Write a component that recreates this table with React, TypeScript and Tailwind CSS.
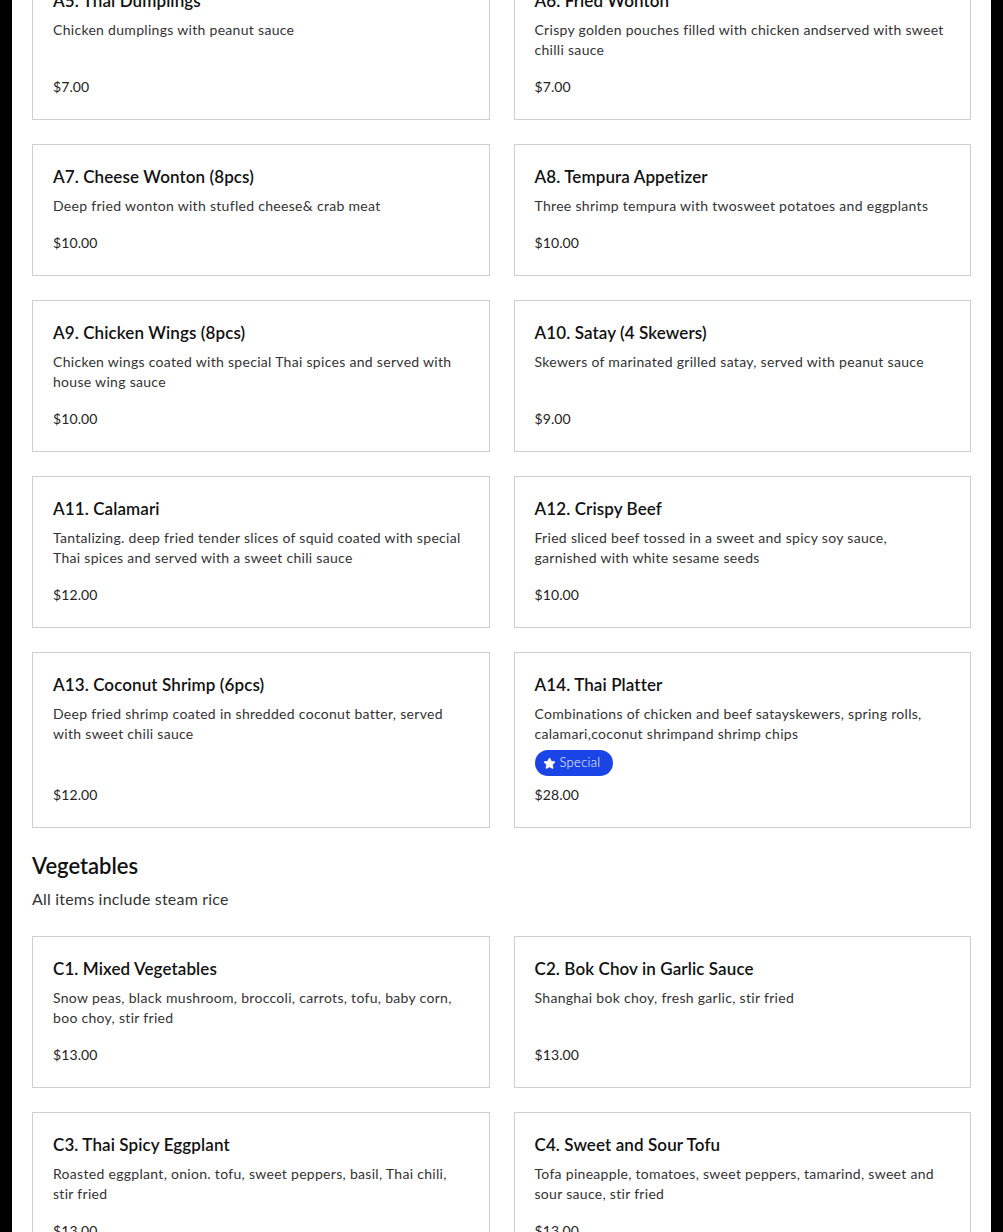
import { Star } from "lucide-react";

type Item = { name: string; desc: string; price: string; special?: boolean };

const appetizers: Item[] = [
  { name: "A5. Thai Dumplings", desc: "Chicken dumplings with peanut sauce", price: "$7.00" },
  { name: "A6. Fried Wonton", desc: "Crispy golden pouches filled with chicken andserved with sweet chilli sauce", price: "$7.00" },
  { name: "A7. Cheese Wonton (8pcs)", desc: "Deep fried wonton with stufled cheese& crab meat", price: "$10.00" },
  { name: "A8. Tempura Appetizer", desc: "Three shrimp tempura with twosweet potatoes and eggplants", price: "$10.00" },
  { name: "A9. Chicken Wings (8pcs)", desc: "Chicken wings coated with special Thai spices and served with house wing sauce", price: "$10.00" },
  { name: "A10. Satay (4 Skewers)", desc: "Skewers of marinated grilled satay, served with peanut sauce", price: "$9.00" },
  { name: "A11. Calamari", desc: "Tantalizing. deep fried tender slices of squid coated with special Thai spices and served with a sweet chili sauce", price: "$12.00" },
  { name: "A12. Crispy Beef", desc: "Fried sliced beef tossed in a sweet and spicy soy sauce, garnished with white sesame seeds", price: "$10.00" },
  { name: "A13. Coconut Shrimp (6pcs)", desc: "Deep fried shrimp coated in shredded coconut batter, served with sweet chili sauce", price: "$12.00" },
  { name: "A14. Thai Platter", desc: "Combinations of chicken and beef satayskewers, spring rolls, calamari,coconut shrimpand shrimp chips", price: "$28.00", special: true },
];

const vegetables: Item[] = [
  { name: "C1. Mixed Vegetables", desc: "Snow peas, black mushroom, broccoli, carrots, tofu, baby corn, boo choy, stir fried", price: "$13.00" },
  { name: "C2. Bok Chov in Garlic Sauce", desc: "Shanghai bok choy, fresh garlic, stir fried", price: "$13.00" },
  { name: "C3. Thai Spicy Eggplant", desc: "Roasted eggplant, onion. tofu, sweet peppers, basil, Thai chili, stir fried", price: "$13.00" },
  { name: "C4. Sweet and Sour Tofu", desc: "Tofa pineapple, tomatoes, sweet peppers, tamarind, sweet and sour sauce, stir fried", price: "$13.00" },
];

function MenuCard({ item }: { item: Item }) {
  return (
    <div className="flex flex-col border border-[#cfcfcf] bg-white px-5 py-5">
      <h3 className="text-[17px] font-semibold leading-6 tracking-[0.1px] text-[#111]">{item.name}</h3>
      <p className="mt-[7px] text-[14px] leading-5 tracking-[0.3px] text-[#333]">{item.desc}</p>
      {item.special && (
        <div className="mt-1.5">
          <span className="inline-flex h-[26px] items-center gap-1 rounded-full bg-[#1a44e6] pl-2 pr-3 text-[13px] font-light tracking-[0.3px] text-white">
            <Star size={13} fill="white" strokeWidth={1.5} />
            Special
          </span>
        </div>
      )}
      <p className={`mt-auto text-[14px] leading-6 tracking-[0.1px] text-[#222] ${item.special ? "pt-[7px]" : "pt-[15px]"}`}>{item.price}</p>
    </div>
  );
}

export default function App() {
  return (
    <div className="min-h-[1232px] overflow-hidden bg-black px-3 font-['Lato','Noto_Sans',sans-serif]">
      <div className="min-h-[1232px] bg-white px-5 pb-10">
        <div className="-mt-[32px] grid grid-cols-2 gap-6">
          {appetizers.map((item) => (
            <MenuCard key={item.name} item={item} />
          ))}
        </div>
        <h2 className="mt-6 text-[22px] font-semibold leading-7 text-[#111]">Vegetables</h2>
        <p className="mt-[7px] text-[16px] leading-6 tracking-[0.2px] text-[#333]">All items include steam rice</p>
        <div className="mt-[25px] grid grid-cols-2 gap-6">
          {vegetables.map((item) => (
            <MenuCard key={item.name} item={item} />
          ))}
        </div>
      </div>
    </div>
  );
}
